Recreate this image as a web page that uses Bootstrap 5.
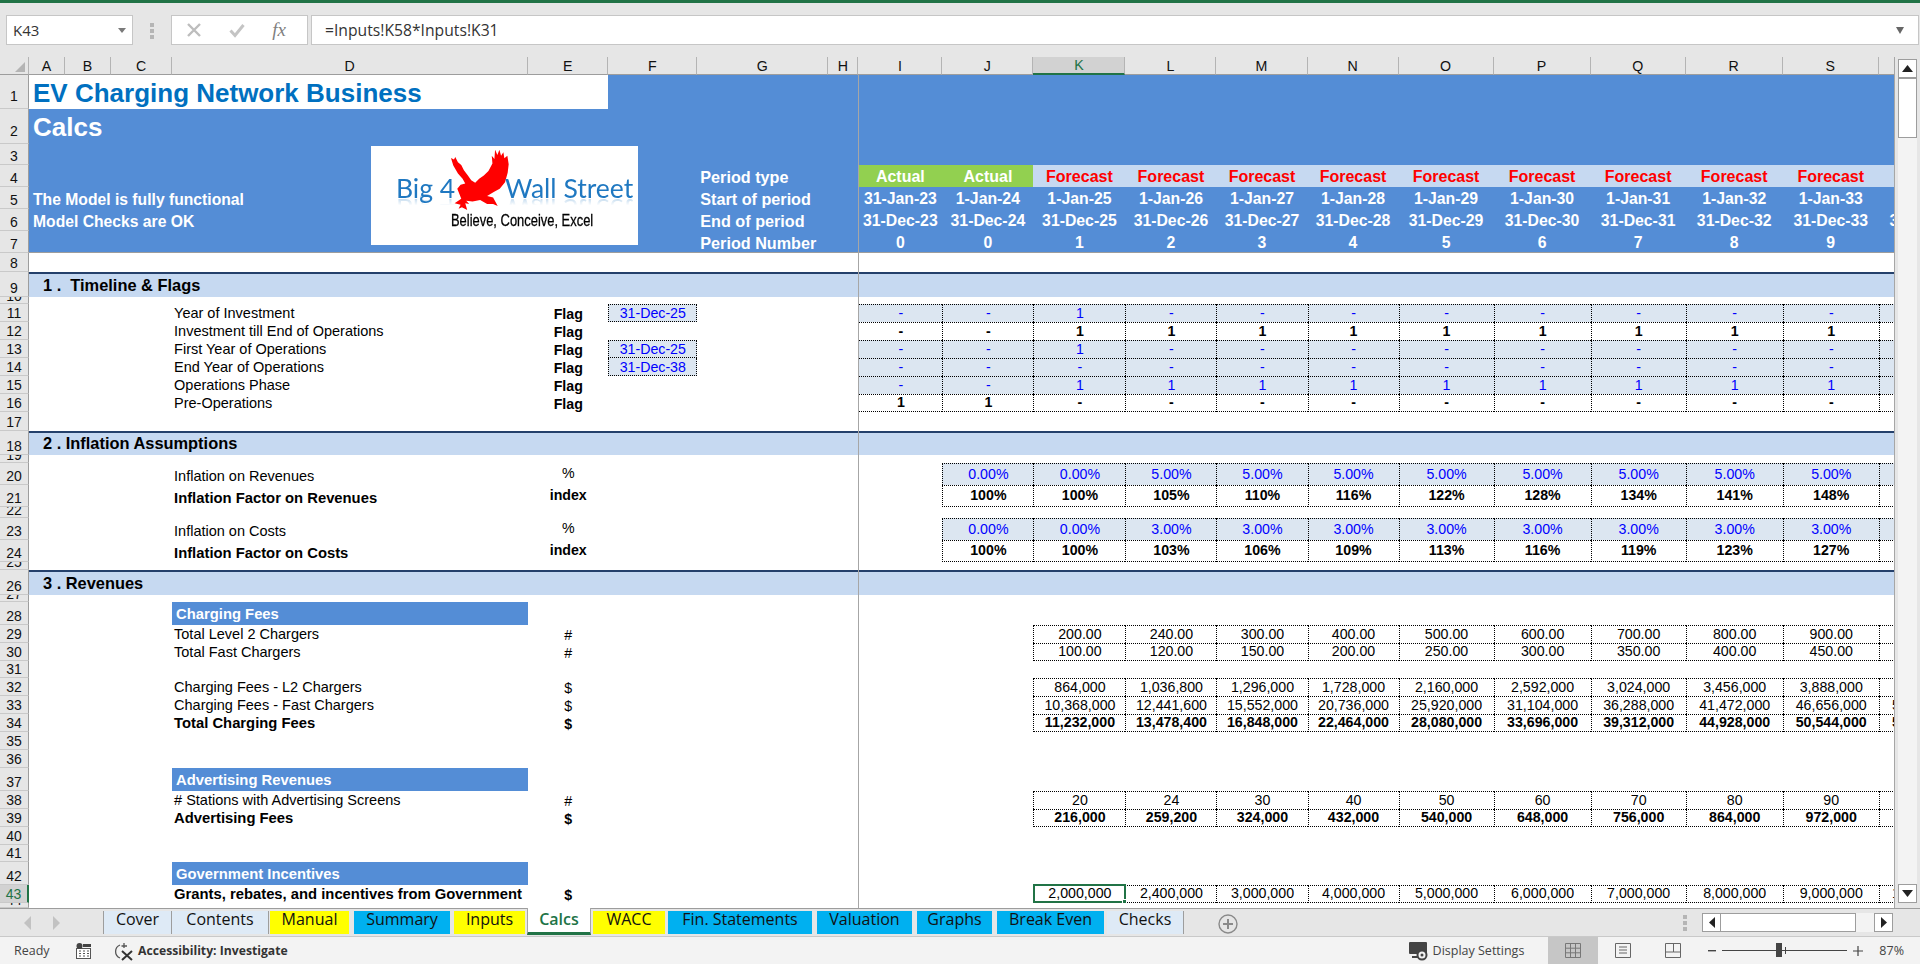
<!DOCTYPE html>
<html lang="en">
<head>
<meta charset="utf-8">
<title>EV Charging Network Business - Calcs</title>
<link href="https://cdn.jsdelivr.net/npm/bootstrap@5.3.0/dist/css/bootstrap.min.css" rel="stylesheet">
<style>
html,body{height:966px;overflow:hidden;background:#fff}
body{font-family:"Liberation Sans",Arial,sans-serif;color:#000}
.app{width:1920px;height:966px}
.ribbon-edge{height:3px;background:#217346}
.fbar{height:54px;background:#e6e6e6;padding-top:12px}
.fbox{height:30px;background:#fff;border:1px solid #c6c6c6}
.namebox{width:127px;margin-left:6px;padding:0 6px;font:15px "Open Sans",sans-serif;color:#333}
.caret-d{width:0;height:0;border-left:4px solid transparent;border-right:4px solid transparent;border-top:5px solid #7a7a7a}
.dots3{width:5px;margin:0 16px 0 17px}
.dots3 i{display:block;width:4px;height:4px;background:#b5b5b5;margin-bottom:2px}
.fxbox{width:137px;padding:0 21px 0 14px}
.fx-t{font:italic 19px "Liberation Serif",serif;color:#7f7f7f}
.forminput{width:1608px;margin-left:3px;padding:0 13px;font:15.7px "Open Sans",sans-serif;color:#333}
.main{height:851px;background:#e6e6e6}
.sheet{width:1895px;height:851px;overflow:hidden;position:relative;border-right:1px solid #a6a6a6;background:#fff}
.grid-t.table{width:1975px;table-layout:fixed;border-collapse:separate;border-spacing:0;margin:0;--bs-table-bg:transparent;--bs-table-accent-bg:transparent;--bs-table-color:#000;font-size:14.2px;line-height:16px}
.grid-t.table>:not(caption)>*>*{padding:0;border:0;white-space:nowrap;overflow:hidden;vertical-align:bottom;box-shadow:none;font-weight:400}
.grid-t.table>:not(caption)>*>th{font-weight:400}
.c0{width:29px}.ca{width:36px}.cb{width:46px}.cc{width:61px}.cd{width:356px}.ce{width:80px}.cf{width:89px}.cg{width:131px}.ch{width:30px}
.ci{width:84px}.cj{width:91px}.ck{width:92px}.cl{width:91px}.cm{width:91px}.cn{width:91px}.co{width:95px}.cp{width:97px}.cq{width:95px}.cr{width:97px}.cs{width:96px}.ct{width:96px}
tr.r5>*{height:5px}tr.r7>*{height:7px}tr.r8>*{height:8px}tr.r11>*{height:11px}tr.r17>*{height:17px}tr.r18>*{height:18px}tr.r19>*{height:19px}tr.r21>*{height:21px}tr.r22>*{height:22px}tr.r23>*{height:23px}tr.r24>*{height:24px}tr.r25>*{height:25px}tr.r34>*{height:34px}tr.r35>*{height:35px}
.grid-t.table>thead>tr>th{background:#e6e6e6;text-align:center;vertical-align:middle;border-right:1px solid #b4b4b4;border-bottom:1px solid #9d9d9d;color:#111}
.grid-t.table>thead>tr>th.no-sep{border-right:0}
.grid-t.table>thead>tr>th.corner{position:relative}
.corner-tri{position:absolute;left:15px;top:5px;width:0;height:0;border-left:10px solid transparent;border-bottom:10px solid #b4b4b4}
.grid-t.table>thead>tr>th.col-on{background:#d2d2d2;color:#217346;border-bottom:2px solid #217346}
.grid-t.table>tbody>tr>th.rh{background:#e6e6e6;text-align:center;vertical-align:bottom;border-right:1px solid #9d9d9d;border-bottom:1px solid #c9c9c9;color:#111;font-size:14px}
.grid-t.table>tbody>tr.r34>th.rh,.grid-t.table>tbody>tr.r35>th.rh{padding-bottom:4px}
.grid-t.table>tbody>tr>th.rh-on{background:#d2d2d2;color:#217346;border-right:2px solid #217346}
.clipn{display:flex;align-items:flex-end;justify-content:center;overflow:hidden;height:100%;line-height:14px}
tr.r5 .clipn{height:4px}tr.r7 .clipn{height:6px}tr.r8 .clipn{height:7px}tr.r11 .clipn{height:10px}
.grid-t.table>tbody>tr>td.blu{background:#548dd6;color:#fff;font-weight:700;font-size:15.8px}
.grid-t.table>tbody>tr.r34>td.wtitle{background:#fff;color:#0070c0;font-size:26px;line-height:30px;font-weight:700;padding:1px 0 0 4px;vertical-align:middle}
.grid-t.table>tbody>tr>td.calcs{font-size:26px;line-height:30px;padding-left:4px;vertical-align:middle}
.grid-t.table>tbody>tr>td.glab{padding:2px 0 0 3px;font-size:16.2px;vertical-align:middle;text-align:left}
.grid-t.table>tbody>tr>td.alab{padding:3px 0 0 4px;font-size:15.7px;vertical-align:middle;text-align:left}
.grid-t.table>tbody>tr>td.mid{text-align:center;vertical-align:middle;padding-top:2px}
.grid-t.table>tbody>tr>td.act{background:#92d050;color:#fff;font-weight:700;font-size:16px;text-align:center;vertical-align:middle;padding-top:2px}
.grid-t.table>tbody>tr>td.fc{background:#c6d9f1;color:#f00;font-weight:700;font-size:16px;text-align:center;vertical-align:middle;padding-top:2px}
.grid-t.table>tbody>tr.r7end>*{border-bottom:1px solid #9d9d9d}
.grid-t.table>tbody>tr>th.rh.keep{border-bottom:1px solid #c9c9c9}
.grid-t.table>tbody>tr>td.sec{background:#c6d9f1;font-weight:700;font-size:16.4px;border-top:2px solid #24406b;padding:0 0 2px 14px;vertical-align:middle}
.grid-t.table>tbody>tr>td.lbl{padding-left:2px;padding-bottom:1px;font-size:14.5px}
.grid-t.table>tbody>tr>td.lbh{background:#548dd6;color:#fff;font-weight:700;font-size:14.8px;padding-left:4px;vertical-align:middle}
.grid-t.table>tbody>tr>td.bd{font-weight:700}
.grid-t.table>tbody>tr>td.lbl.bd{font-size:14.8px}
.grid-t.table>tbody>tr>td.ce{text-align:center}
.grid-t.table>tbody>tr>td.cem{text-align:center;vertical-align:middle;padding-bottom:2px}
.grid-t.table>tbody>tr>td.dtf{background:#dce6f1;color:#00f;text-align:center;vertical-align:middle;border:1px dotted #000}
.grid-t.table>tbody>tr>td.dtf2{border-top:0}
.grid-t.table>tbody>tr>td.v{text-align:center;vertical-align:middle;border-top:1px dotted #000;border-left:1px dotted #000;padding-bottom:1px;line-height:15px}
.grid-t.table>tbody>tr.inp>td.v{background:#dce6f1;color:#00f}
.grid-t.table>tbody>tr.tot>td.v{font-weight:700}
.grid-t.table>tbody>tr.endb>td.v{border-bottom:1px dotted #000}
.sel-wrap{position:relative}
.sel-box{position:absolute;left:-1px;top:-2px;right:-1px;bottom:-1px;border:2px solid #217346;pointer-events:none}
.sel-box::after{content:"";position:absolute;right:-3px;bottom:-3px;width:5px;height:5px;background:#217346;border:1px solid #fff}
.grid-t.table>tbody>tr>td.v.sel-wrap{overflow:visible}
.freeze-l{position:absolute;left:858px;top:18px;bottom:0;width:1px;background:#a6a6a6}
.logo-pic{position:absolute;left:371px;top:89px;width:267px;height:99px;background:#fff;overflow:hidden}
.lg-txt{position:absolute;white-space:nowrap;color:#1f78c1;font:26.5px "Lato",sans-serif;line-height:30px;-webkit-box-reflect:below -9px linear-gradient(transparent 62%,rgba(255,255,255,.45))}
.lg-a{left:25px;top:27px}
.lg-b{left:134px;top:27px}
.lg-tag{position:absolute;left:80px;top:65px;white-space:nowrap;font:17px "Liberation Sans",sans-serif;line-height:20px;color:#000;-webkit-text-stroke:.3px #000;transform:scaleX(.76);transform-origin:left center}
.eagle{position:absolute;left:74px;top:2px;width:67px;height:63px}
.vbar{width:25px;padding:2px 3px 5px 3px;background:#e6e6e6}
.vtrack{background:#f3f3f3;height:100%}
.sb-btn{background:#fff;border:1px solid #9d9d9d;height:19px;width:19px}
.sb-thumb{background:#fff;border:1px solid #9d9d9d;height:60px;width:19px}
.tabbar{height:29px;background:#e6e6e6;border-top:1px solid #9d9d9d;border-bottom:1px solid #c9c9c9;position:relative}
.nav-arrows{width:103px;padding-left:24px;gap:20px}
.sheet-tabs{height:27px;padding-top:2px}
.st{height:23px;font:16px "Open Sans",sans-serif;line-height:17px;text-align:center;color:#111;border-right:1px solid #9d9d9d}
.st-l{background:#deeaf6}.st-y{background:#ff0;border-right:0}.st-c{background:#00b0f0;border-right:0}
.st-on{background:#fff;color:#217346;font-weight:600;height:27px;margin-top:-3px;padding-top:3px;border:1px solid #a6a6a6;border-top:0;border-bottom:3px solid #217346}
.t1{width:69px;border-left:1px solid #9d9d9d}.t2{width:97px;margin-right:1px}.t3{width:79px;margin-right:5px}.t4{width:96px;margin-right:4px}.t5{width:71px;margin-right:2px}.t6{width:64px;margin-right:2px}.t7{width:72px;margin-right:3px}.t8{width:144px;margin-right:5px}.t9{width:95px;margin-right:5px}.t10{width:75px;margin-right:5px}.t11{width:107px;margin-right:3px}.t12{width:77px}
.add-sh{width:20px;height:20px;margin-left:34px;margin-top:3px;flex:none}
.hs{position:absolute;left:1702px;top:4px;width:191px;height:19px;background:#f3f3f3}
.hs-b{width:19px;height:19px;background:#fff;border:1px solid #9d9d9d}
.hs-t{width:135px;height:19px;background:#fff;border:1px solid #9d9d9d;border-left:0}
.hdots{position:absolute;left:1683px;top:6px}
.status{height:27px;background:#f3f3f3;position:relative;font:12.5px "Open Sans",sans-serif;color:#444}
.status-foot{height:2px;background:#fff}
.s-ready{margin-left:14px;width:62px}
.s-acc-ic{margin-left:22px}
.s-acc{font-weight:700;font-size:12.2px;color:#333;margin-left:4px}
.s-right{position:absolute;right:0;top:0;height:27px}
.s-view{width:50px;height:27px}.s-view-on{background:#c6c6c6}
.zm-minus{margin-left:10px}
.zoom-line{position:relative;width:125px;height:1px;background:#444;margin:0 6px}
.zoom-th{position:absolute;left:54px;top:-7px;width:6px;height:14px;background:#444}
.zoom-tk{position:absolute;left:63px;top:-3px;width:1px;height:7px;background:#444}
</style>
</head>
<body>
<div class="app d-flex flex-column">
<div class="ribbon-edge"></div>
<div class="fbar d-flex align-items-start">
  <div class="fbox namebox d-flex align-items-center justify-content-between"><span>K43</span><span class="caret-d"></span></div>
  <div class="dots3 d-flex flex-column pt-2"><i></i><i></i><i></i></div>
  <div class="fbox fxbox d-flex align-items-center justify-content-between">
    <svg width="16" height="16" viewBox="0 0 16 16"><path d="M2 2 L14 14 M14 2 L2 14" stroke="#bdbdbd" stroke-width="2.4" fill="none"/></svg>
    <svg width="16" height="16" viewBox="0 0 16 16"><path d="M1.5 8.5 L6 13.5 L14.5 3" stroke="#c4c4c4" stroke-width="3" fill="none"/></svg>
    <span class="fx-t">fx</span>
  </div>
  <div class="fbox forminput d-flex align-items-center justify-content-between"><span>=Inputs!K58*Inputs!K31</span><svg width="9" height="9" viewBox="0 0 9 9"><path d="M0 1 H8 L4 8 Z M3 0" fill="#666"/></svg></div>
</div>
<div class="main d-flex">
<div class="sheet">
<table class="table grid-t">
<colgroup><col class="c0"><col class="ca"><col class="cb"><col class="cc"><col class="cd"><col class="ce"><col class="cf"><col class="cg"><col class="ch"><col class="ci"><col class="cj"><col class="ck"><col class="cl"><col class="cm"><col class="cn"><col class="co"><col class="cp"><col class="cq"><col class="cr"><col class="cs"><col class="ct"></colgroup>
<thead><tr class="r18"><th class="corner"><span class="corner-tri"></span></th><th>A</th><th>B</th><th>C</th><th>D</th><th>E</th><th>F</th><th>G</th><th>H</th><th>I</th><th>J</th><th class="col-on">K</th><th>L</th><th>M</th><th>N</th><th>O</th><th>P</th><th>Q</th><th>R</th><th>S</th><th class="no-sep">T</th></tr></thead>
<tbody>
<tr class="r34"><th class="rh">1</th><td colspan="5" class="wtitle">EV Charging Network Business</td><td colspan="15" class="blu"></td></tr>
<tr class="r35"><th class="rh">2</th><td colspan="20" class="blu calcs">Calcs</td></tr>
<tr class="r21"><th class="rh">3</th><td colspan="20" class="blu"></td></tr>
<tr class="r22"><th class="rh">4</th><td colspan="6" class="blu"></td><td class="blu glab">Period type</td><td class="blu"></td><td class="act">Actual</td><td class="act">Actual</td><td class="fc">Forecast</td><td class="fc">Forecast</td><td class="fc">Forecast</td><td class="fc">Forecast</td><td class="fc">Forecast</td><td class="fc">Forecast</td><td class="fc">Forecast</td><td class="fc">Forecast</td><td class="fc">Forecast</td><td class="fc">Forecast</td></tr>
<tr class="r22"><th class="rh">5</th><td colspan="6" class="blu alab">The Model is fully functional</td><td class="blu glab">Start of period</td><td class="blu"></td><td class="blu mid">31-Jan-23</td><td class="blu mid">1-Jan-24</td><td class="blu mid">1-Jan-25</td><td class="blu mid">1-Jan-26</td><td class="blu mid">1-Jan-27</td><td class="blu mid">1-Jan-28</td><td class="blu mid">1-Jan-29</td><td class="blu mid">1-Jan-30</td><td class="blu mid">1-Jan-31</td><td class="blu mid">1-Jan-32</td><td class="blu mid">1-Jan-33</td><td class="blu mid">1-Jan-34</td></tr>
<tr class="r22"><th class="rh">6</th><td colspan="6" class="blu alab">Model Checks are OK</td><td class="blu glab">End of period</td><td class="blu"></td><td class="blu mid">31-Dec-23</td><td class="blu mid">31-Dec-24</td><td class="blu mid">31-Dec-25</td><td class="blu mid">31-Dec-26</td><td class="blu mid">31-Dec-27</td><td class="blu mid">31-Dec-28</td><td class="blu mid">31-Dec-29</td><td class="blu mid">31-Dec-30</td><td class="blu mid">31-Dec-31</td><td class="blu mid">31-Dec-32</td><td class="blu mid">31-Dec-33</td><td class="blu mid">31-Dec-34</td></tr>
<tr class="r22 r7end"><th class="rh keep">7</th><td colspan="6" class="blu"></td><td class="blu glab">Period Number</td><td class="blu"></td><td class="blu mid">0</td><td class="blu mid">0</td><td class="blu mid">1</td><td class="blu mid">2</td><td class="blu mid">3</td><td class="blu mid">4</td><td class="blu mid">5</td><td class="blu mid">6</td><td class="blu mid">7</td><td class="blu mid">8</td><td class="blu mid">9</td><td class="blu mid">10</td></tr>
<tr class="r19"><th class="rh">8</th><td colspan="20"></td></tr>
<tr class="r25"><th class="rh">9</th><td colspan="20" class="sec">1 .&nbsp; Timeline &amp; Flags</td></tr>
<tr class="r7"><th class="rh"><span class="clipn">10</span></th><td colspan="20"></td></tr>
<tr class="r18 inp"><th class="rh">11</th><td colspan="3"></td><td class="lbl">Year of Investment</td><td class="ce bd">Flag</td><td class="dtf">31-Dec-25</td><td colspan="2"></td><td class="v">-</td><td class="v">-</td><td class="v">1</td><td class="v">-</td><td class="v">-</td><td class="v">-</td><td class="v">-</td><td class="v">-</td><td class="v">-</td><td class="v">-</td><td class="v">-</td><td class="v">-</td></tr>
<tr class="r18 tot"><th class="rh">12</th><td colspan="3"></td><td class="lbl">Investment till End of Operations</td><td class="ce bd">Flag</td><td></td><td colspan="2"></td><td class="v">-</td><td class="v">-</td><td class="v">1</td><td class="v">1</td><td class="v">1</td><td class="v">1</td><td class="v">1</td><td class="v">1</td><td class="v">1</td><td class="v">1</td><td class="v">1</td><td class="v">1</td></tr>
<tr class="r18 inp"><th class="rh">13</th><td colspan="3"></td><td class="lbl">First Year of Operations</td><td class="ce bd">Flag</td><td class="dtf">31-Dec-25</td><td colspan="2"></td><td class="v">-</td><td class="v">-</td><td class="v">1</td><td class="v">-</td><td class="v">-</td><td class="v">-</td><td class="v">-</td><td class="v">-</td><td class="v">-</td><td class="v">-</td><td class="v">-</td><td class="v">-</td></tr>
<tr class="r18 inp"><th class="rh">14</th><td colspan="3"></td><td class="lbl">End Year of Operations</td><td class="ce bd">Flag</td><td class="dtf dtf2">31-Dec-38</td><td colspan="2"></td><td class="v">-</td><td class="v">-</td><td class="v">-</td><td class="v">-</td><td class="v">-</td><td class="v">-</td><td class="v">-</td><td class="v">-</td><td class="v">-</td><td class="v">-</td><td class="v">-</td><td class="v">-</td></tr>
<tr class="r18 inp"><th class="rh">15</th><td colspan="3"></td><td class="lbl">Operations Phase</td><td class="ce bd">Flag</td><td></td><td colspan="2"></td><td class="v">-</td><td class="v">-</td><td class="v">1</td><td class="v">1</td><td class="v">1</td><td class="v">1</td><td class="v">1</td><td class="v">1</td><td class="v">1</td><td class="v">1</td><td class="v">1</td><td class="v">1</td></tr>
<tr class="r18 tot endb"><th class="rh">16</th><td colspan="3"></td><td class="lbl">Pre-Operations</td><td class="ce bd">Flag</td><td></td><td colspan="2"></td><td class="v">1</td><td class="v">1</td><td class="v">-</td><td class="v">-</td><td class="v">-</td><td class="v">-</td><td class="v">-</td><td class="v">-</td><td class="v">-</td><td class="v">-</td><td class="v">-</td><td class="v">-</td></tr>
<tr class="r19"><th class="rh">17</th><td colspan="20"></td></tr>
<tr class="r24"><th class="rh">18</th><td colspan="20" class="sec">2 . Inflation Assumptions</td></tr>
<tr class="r8"><th class="rh"><span class="clipn">19</span></th><td colspan="20"></td></tr>
<tr class="r22 inp"><th class="rh">20</th><td colspan="3"></td><td class="lbl">Inflation on Revenues</td><td class="cem">%</td><td colspan="4"></td><td class="v">0.00%</td><td class="v">0.00%</td><td class="v">5.00%</td><td class="v">5.00%</td><td class="v">5.00%</td><td class="v">5.00%</td><td class="v">5.00%</td><td class="v">5.00%</td><td class="v">5.00%</td><td class="v">5.00%</td><td class="v">5.00%</td></tr>
<tr class="r22 tot endb"><th class="rh">21</th><td colspan="3"></td><td class="lbl bd">Inflation Factor on Revenues</td><td class="cem bd">index</td><td colspan="4"></td><td class="v">100%</td><td class="v">100%</td><td class="v">105%</td><td class="v">110%</td><td class="v">116%</td><td class="v">122%</td><td class="v">128%</td><td class="v">134%</td><td class="v">141%</td><td class="v">148%</td><td class="v">155%</td></tr>
<tr class="r11"><th class="rh"><span class="clipn">22</span></th><td colspan="20"></td></tr>
<tr class="r22 inp"><th class="rh">23</th><td colspan="3"></td><td class="lbl">Inflation on Costs</td><td class="cem">%</td><td colspan="4"></td><td class="v">0.00%</td><td class="v">0.00%</td><td class="v">3.00%</td><td class="v">3.00%</td><td class="v">3.00%</td><td class="v">3.00%</td><td class="v">3.00%</td><td class="v">3.00%</td><td class="v">3.00%</td><td class="v">3.00%</td><td class="v">3.00%</td></tr>
<tr class="r22 tot endb"><th class="rh">24</th><td colspan="3"></td><td class="lbl bd">Inflation Factor on Costs</td><td class="cem bd">index</td><td colspan="4"></td><td class="v">100%</td><td class="v">100%</td><td class="v">103%</td><td class="v">106%</td><td class="v">109%</td><td class="v">113%</td><td class="v">116%</td><td class="v">119%</td><td class="v">123%</td><td class="v">127%</td><td class="v">130%</td></tr>
<tr class="r8"><th class="rh"><span class="clipn">25</span></th><td colspan="20"></td></tr>
<tr class="r25"><th class="rh">26</th><td colspan="20" class="sec">3 . Revenues</td></tr>
<tr class="r7"><th class="rh"><span class="clipn">27</span></th><td colspan="20"></td></tr>
<tr class="r23"><th class="rh">28</th><td colspan="3"></td><td class="lbh">Charging Fees</td><td colspan="16"></td></tr>
<tr class="r18"><th class="rh">29</th><td colspan="3"></td><td class="lbl">Total Level 2 Chargers</td><td class="ce">#</td><td colspan="5"></td><td class="v">200.00</td><td class="v">240.00</td><td class="v">300.00</td><td class="v">400.00</td><td class="v">500.00</td><td class="v">600.00</td><td class="v">700.00</td><td class="v">800.00</td><td class="v">900.00</td><td class="v">1,000.00</td></tr>
<tr class="r18 endb"><th class="rh">30</th><td colspan="3"></td><td class="lbl">Total Fast Chargers</td><td class="ce">#</td><td colspan="5"></td><td class="v">100.00</td><td class="v">120.00</td><td class="v">150.00</td><td class="v">200.00</td><td class="v">250.00</td><td class="v">300.00</td><td class="v">350.00</td><td class="v">400.00</td><td class="v">450.00</td><td class="v">500.00</td></tr>
<tr class="r17"><th class="rh">31</th><td colspan="20"></td></tr>
<tr class="r18"><th class="rh">32</th><td colspan="3"></td><td class="lbl">Charging Fees - L2 Chargers</td><td class="ce">$</td><td colspan="5"></td><td class="v">864,000</td><td class="v">1,036,800</td><td class="v">1,296,000</td><td class="v">1,728,000</td><td class="v">2,160,000</td><td class="v">2,592,000</td><td class="v">3,024,000</td><td class="v">3,456,000</td><td class="v">3,888,000</td><td class="v">4,320,000</td></tr>
<tr class="r18"><th class="rh">33</th><td colspan="3"></td><td class="lbl">Charging Fees - Fast Chargers</td><td class="ce">$</td><td colspan="5"></td><td class="v">10,368,000</td><td class="v">12,441,600</td><td class="v">15,552,000</td><td class="v">20,736,000</td><td class="v">25,920,000</td><td class="v">31,104,000</td><td class="v">36,288,000</td><td class="v">41,472,000</td><td class="v">46,656,000</td><td class="v">51,840,000</td></tr>
<tr class="r18 tot endb"><th class="rh">34</th><td colspan="3"></td><td class="lbl bd">Total Charging Fees</td><td class="ce bd">$</td><td colspan="5"></td><td class="v">11,232,000</td><td class="v">13,478,400</td><td class="v">16,848,000</td><td class="v">22,464,000</td><td class="v">28,080,000</td><td class="v">33,696,000</td><td class="v">39,312,000</td><td class="v">44,928,000</td><td class="v">50,544,000</td><td class="v">56,160,000</td></tr>
<tr class="r18"><th class="rh">35</th><td colspan="20"></td></tr>
<tr class="r18"><th class="rh">36</th><td colspan="20"></td></tr>
<tr class="r23"><th class="rh">37</th><td colspan="3"></td><td class="lbh">Advertising Revenues</td><td colspan="16"></td></tr>
<tr class="r18"><th class="rh">38</th><td colspan="3"></td><td class="lbl"># Stations with Advertising Screens</td><td class="ce">#</td><td colspan="5"></td><td class="v">20</td><td class="v">24</td><td class="v">30</td><td class="v">40</td><td class="v">50</td><td class="v">60</td><td class="v">70</td><td class="v">80</td><td class="v">90</td><td class="v">100</td></tr>
<tr class="r18 tot endb"><th class="rh">39</th><td colspan="3"></td><td class="lbl bd">Advertising Fees</td><td class="ce bd">$</td><td colspan="5"></td><td class="v">216,000</td><td class="v">259,200</td><td class="v">324,000</td><td class="v">432,000</td><td class="v">540,000</td><td class="v">648,000</td><td class="v">756,000</td><td class="v">864,000</td><td class="v">972,000</td><td class="v">1,080,000</td></tr>
<tr class="r18"><th class="rh">40</th><td colspan="20"></td></tr>
<tr class="r17"><th class="rh">41</th><td colspan="20"></td></tr>
<tr class="r23"><th class="rh">42</th><td colspan="3"></td><td class="lbh">Government Incentives</td><td colspan="16"></td></tr>
<tr class="r18 endb"><th class="rh rh-on">43</th><td colspan="3"></td><td class="lbl bd">Grants, rebates, and incentives from Government</td><td class="ce bd">$</td><td colspan="5"></td><td class="v sel-wrap">2,000,000<span class="sel-box"></span></td><td class="v">2,400,000</td><td class="v">3,000,000</td><td class="v">4,000,000</td><td class="v">5,000,000</td><td class="v">6,000,000</td><td class="v">7,000,000</td><td class="v">8,000,000</td><td class="v">9,000,000</td><td class="v">10,000,000</td></tr>
<tr class="r5"><th class="rh"><span class="clipn">44</span></th><td colspan="20"></td></tr>
</tbody>
</table>
<div class="freeze-l"></div>
<div class="logo-pic">
  <svg class="eagle" viewBox="240 25 200 190" aria-hidden="true"><path fill="#f00" d="M257 55 L266 60 L270 52 L278 68 L288 76 L296 92 L308 108 L318 122 L330 130 L342 118 L356 108 L370 94 L382 72 L380 48 L388 58 L390 30 L397 46 L403 30 L408 48 L415 38 L418 56 L427 48 L431 74 L428 100 L420 128 L404 148 L386 158 L366 170 L384 174 L398 200 L384 194 L366 194 L345 182 L322 186 L303 184 L312 194 L300 192 L306 212 L290 204 L280 208 L286 196 L268 192 L288 178 L280 158 L276 148 L286 136 L300 132 L292 118 L278 102 L264 78 Z"/></svg>
  <span class="lg-txt lg-a">Big 4</span>
  <span class="lg-txt lg-b">Wall Street</span>
  <span class="lg-tag">Believe, Conceive, Excel</span>
</div>
</div>
<div class="vbar d-flex flex-column">
  <div class="vtrack d-flex flex-column justify-content-between">
    <div>
      <div class="sb-btn d-flex align-items-center justify-content-center"><svg width="11" height="7" viewBox="0 0 11 7"><path d="M5.5 0 L11 7 H0 Z" fill="#222"/></svg></div>
      <div class="sb-thumb"></div>
    </div>
    <div class="sb-btn d-flex align-items-center justify-content-center"><svg width="11" height="7" viewBox="0 0 11 7"><path d="M0 0 H11 L5.5 7 Z" fill="#222"/></svg></div>
  </div>
</div>
</div>
<div class="tabbar d-flex">
  <div class="nav-arrows d-flex align-items-center">
    <svg width="8" height="14" viewBox="0 0 8 14"><path d="M7 0 V14 L0 7 Z" fill="#c2c2c2"/></svg>
    <svg width="8" height="14" viewBox="0 0 8 14"><path d="M1 0 V14 L8 7 Z" fill="#c2c2c2"/></svg>
  </div>
  <div class="sheet-tabs d-flex">
    <div class="st st-l t1">Cover</div><div class="st st-l t2">Contents</div><div class="st st-y t3">Manual</div><div class="st st-c t4">Summary</div><div class="st st-y t5">Inputs</div><div class="st st-on t6">Calcs</div><div class="st st-y t7">WACC</div><div class="st st-c t8">Fin. Statements</div><div class="st st-c t9">Valuation</div><div class="st st-c t10">Graphs</div><div class="st st-c t11">Break Even</div><div class="st st-l t12">Checks</div>
    <svg class="add-sh" viewBox="0 0 20 20"><circle cx="10" cy="10" r="9" fill="none" stroke="#8a8a8a" stroke-width="1.4"/><path d="M10 5 V15 M5 10 H15" stroke="#8a8a8a" stroke-width="2"/></svg>
  </div>
  <div class="hdots dots3 m-0"><i></i><i></i><i></i></div>
  <div class="hs d-flex">
    <div class="hs-b d-flex align-items-center justify-content-center"><svg width="6" height="11" viewBox="0 0 6 11"><path d="M6 0 V11 L0 5.5 Z" fill="#222"/></svg></div>
    <div class="hs-t"></div>
    <div class="hs-b ms-auto d-flex align-items-center justify-content-center"><svg width="6" height="11" viewBox="0 0 6 11"><path d="M0 0 V11 L6 5.5 Z" fill="#222"/></svg></div>
  </div>
</div>
<div class="status d-flex align-items-center">
  <span class="s-ready">Ready</span>
  <svg width="16" height="16" viewBox="0 0 16 16"><rect x="0.5" y="5.5" width="14" height="10" fill="#fff" stroke="#555"/><circle cx="3.5" cy="3" r="3" fill="#444"/><rect x="7" y="1" width="8" height="3" fill="#444"/><path d="M3 8h2M7 8h2M11 8h2M3 10.5h2M7 10.5h2M11 10.5h2M3 13h2M7 13h2M11 13h2" stroke="#555"/></svg>
  <svg class="s-acc-ic" width="20" height="20" viewBox="0 0 20 20"><path d="M6 4 A7 7 0 0 0 6 17" fill="none" stroke="#555" stroke-width="1.3"/><path d="M10 2 V7 M7.5 5 H13" stroke="#555" stroke-width="1.3"/><path d="M8 10 L18 19 M18 10 L8 19" stroke="#333" stroke-width="2"/></svg>
  <span class="s-acc">Accessibility: Investigate</span>
  <div class="s-right d-flex align-items-center">
    <svg width="20" height="20" viewBox="0 0 20 20"><rect x="0" y="1" width="18" height="12" rx="1" fill="#444"/><rect x="3" y="15" width="6" height="2" fill="#444"/><circle cx="13" cy="14" r="4.5" fill="#f3f3f3" stroke="#444" stroke-width="2"/><circle cx="13" cy="14" r="1.5" fill="#444"/></svg>
    <span class="ms-1 me-4">Display Settings</span>
    <div class="s-view s-view-on d-flex align-items-center justify-content-center"><svg width="16" height="15" viewBox="0 0 16 15"><path d="M.5.5h15v14H.5zM5.5.5v14M10.5.5v14M.5 5.2h15M.5 9.8h15" fill="none" stroke="#777"/></svg></div>
    <div class="s-view d-flex align-items-center justify-content-center"><svg width="16" height="15" viewBox="0 0 16 15"><path d="M.5.5h15v14H.5zM4 4h8M4 7h8M4 10h8" fill="none" stroke="#666"/></svg></div>
    <div class="s-view d-flex align-items-center justify-content-center"><svg width="16" height="15" viewBox="0 0 16 15"><path d="M.5.5h15v14H.5zM.5 9h8V.5M8.5 9h7" fill="none" stroke="#666"/></svg></div>
    <svg class="zm-minus" width="8" height="2" viewBox="0 0 8 2"><rect width="8" height="1.4" fill="#444"/></svg>
    <div class="zoom-line"><span class="zoom-th"></span><span class="zoom-tk"></span></div>
    <svg width="10" height="10" viewBox="0 0 10 10"><path d="M0 5 H10 M5 0 V10" stroke="#444" stroke-width="1.2"/></svg>
    <span class="ms-3 me-3">87%</span>
  </div>
</div>
<div class="status-foot"></div>
</div>
<script src="https://cdn.jsdelivr.net/npm/bootstrap@5.3.0/dist/js/bootstrap.bundle.min.js"></script>
</body>
</html>
